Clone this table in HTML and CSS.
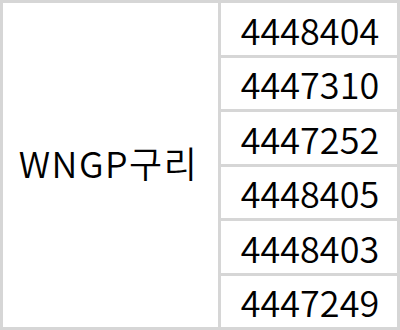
FILE: index.html
```html
<!DOCTYPE html>
<html lang="ko">
<head>
<meta charset="utf-8">
<link rel="stylesheet" href="styles.css">
</head>
<body>
<div class="table">
  <div class="cell name">WNGP구리</div>
  <div class="cell num">4448404</div>
  <div class="cell num">4447310</div>
  <div class="cell num">4447252</div>
  <div class="cell num">4448405</div>
  <div class="cell num">4448403</div>
  <div class="cell num">4447249</div>
</div>
</body>
</html>
```
FILE: styles.css
```css
html, body {
  margin: 0;
  padding: 0;
  background: #ffffff;
}
.table {
  width: 400px;
  height: 330px;
  box-sizing: border-box;
  padding: 3px;
  background: #d6d6d6;
  display: grid;
  grid-template-columns: 215px 176px;
  grid-template-rows: repeat(6, 1fr);
  gap: 3px;
  font-family: "Noto Sans CJK KR", "Noto Sans", sans-serif;
  font-size: 36px;
  font-weight: 350;
  color: #000;
}
.cell {
  background: #ffffff;
  display: flex;
  align-items: center;
  justify-content: center;
  line-height: 1;
}
.name {
  grid-column: 1;
  grid-row: 1 / span 6;
  letter-spacing: 1.5px;
  padding-right: 4px;
  padding-bottom: 6px;
}
.num {
  grid-column: 2;
  padding-left: 2px;
}
```
